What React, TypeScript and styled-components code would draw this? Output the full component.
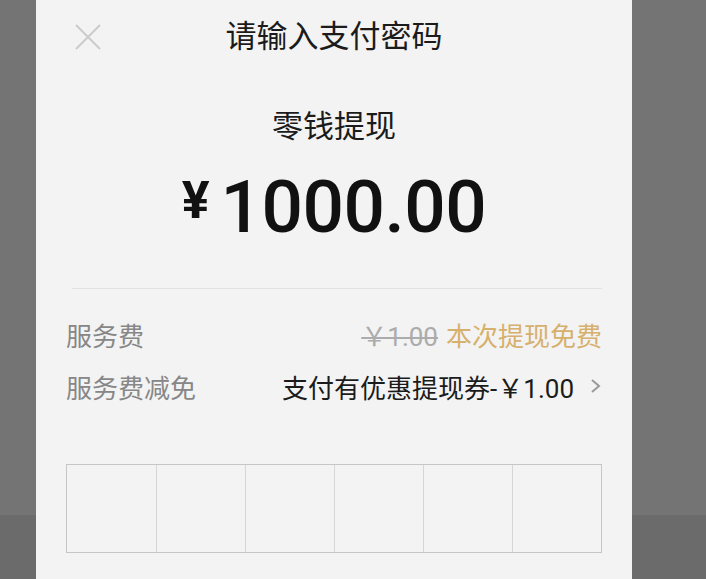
import React from 'react';
import styled, { createGlobalStyle } from 'styled-components';

const GlobalStyle = createGlobalStyle`
  html, body {
    margin: 0;
    padding: 0;
  }
  body {
    font-family: Roboto, "Noto Sans CJK SC", sans-serif;
  }
`;

const cjk = `Roboto, "Noto Sans CJK SC", sans-serif`;

// page behind the dialog
const Backdrop = styled.div`
  min-height: 579px;
  height: 100vh;
  background: linear-gradient(#747474 0 515px, #6b6b6b 515px);
  display: flex;
  overflow: hidden;
`;

const Sheet = styled.div`
  width: 596px;
  margin-left: 36px;
  background: #f3f3f3;
  padding: 0 30px;
  box-sizing: border-box;
  display: flex;
  flex-direction: column;
`;

const Header = styled.div`
  height: 74px;
  display: grid;
  grid-template-columns: 1fr auto 1fr;
  align-items: center;
`;

const CloseButton = styled.button`
  width: 28px;
  height: 28px;
  margin-left: 8px;
  padding: 0;
  border: none;
  background: none;
  display: flex;
  align-items: center;
  justify-content: center;
  cursor: pointer;
`;

const Title = styled.h1`
  margin: 0;
  font-family: ${cjk};
  font-size: 31px;
  font-weight: 400;
  line-height: 40px;
  color: #1b1b1b;
  text-align: center;
`;

const SubTitle = styled.div`
  margin-top: 33px;
  font-family: ${cjk};
  font-size: 31px;
  line-height: 40px;
  color: #1b1b1b;
  text-align: center;
`;

const Amount = styled.div`
  margin-top: 20px;
  display: flex;
  justify-content: center;
  align-items: flex-start;
  color: #111;
`;

const Currency = styled.span`
  font-family: Roboto, sans-serif;
  font-size: 52px;
  font-weight: 700;
  line-height: 52px;
  margin-top: 8px;
  margin-right: 11px;
`;

const Digits = styled.span`
  font-family: Roboto, sans-serif;
  font-size: 73px;
  font-weight: 500;
  line-height: 80px;
  letter-spacing: -0.5px;
`;

const Divider = styled.hr`
  margin: 41px 0 19px 6px;
  border: none;
  border-top: 1px solid #e2e2e2;
  height: 0;
`;

const Row = styled.div`
  height: 52px;
  display: flex;
  align-items: center;
  justify-content: space-between;
  font-family: ${cjk};
  font-size: 26px;
`;

const Label = styled.span`
  color: #878787;
`;

const Value = styled.span`
  display: flex;
  align-items: center;
  gap: 8px;
`;

const Struck = styled.span`
  color: #acacac;
  text-decoration: line-through;
  text-decoration-thickness: 2px;
`;

const Highlight = styled.span`
  color: #d6b06c;
`;

const Plain = styled.span`
  color: #1b1b1b;
`;

const PinBox = styled.div`
  margin-top: 52px;
  height: 89px;
  display: grid;
  grid-template-columns: repeat(6, 1fr);
  border: 1px solid #c6c6c6;
  box-sizing: border-box;
`;

const PinCell = styled.div`
  border-left: 1px solid #d6d6d6;
  &:first-child {
    border-left: none;
  }
`;

const CloseIcon = () => (
  <svg width="28" height="28" viewBox="0 0 28 28">
    <path d="M2 2 L26 26 M26 2 L2 26" stroke="#cbcbcb" strokeWidth="2" fill="none" />
  </svg>
);

const Chevron = () => (
  <svg width="12" height="16" viewBox="0 0 12 16" style={{ marginLeft: 8 }}>
    <polyline points="2,2 9,8 2,14" stroke="#9a9a9a" strokeWidth="2" fill="none" />
  </svg>
);

export default function App() {
  return (
    <>
      <GlobalStyle />
      <Backdrop>
        <Sheet>
          <Header>
            <CloseButton aria-label="关闭">
              <CloseIcon />
            </CloseButton>
            <Title>请输入支付密码</Title>
            <span />
          </Header>
          <SubTitle>零钱提现</SubTitle>
          <Amount>
            <Currency>¥</Currency>
            <Digits>1000.00</Digits>
          </Amount>
          <Divider />
          <Row>
            <Label>服务费</Label>
            <Value>
              <Struck>￥1.00</Struck>
              <Highlight>本次提现免费</Highlight>
            </Value>
          </Row>
          <Row>
            <Label>服务费减免</Label>
            <Value>
              <Plain>支付有优惠提现券-￥1.00</Plain>
              <Chevron />
            </Value>
          </Row>
          <PinBox>
            {Array.from({ length: 6 }).map((_, i) => (
              <PinCell key={i} />
            ))}
          </PinBox>
        </Sheet>
      </Backdrop>
    </>
  );
}
